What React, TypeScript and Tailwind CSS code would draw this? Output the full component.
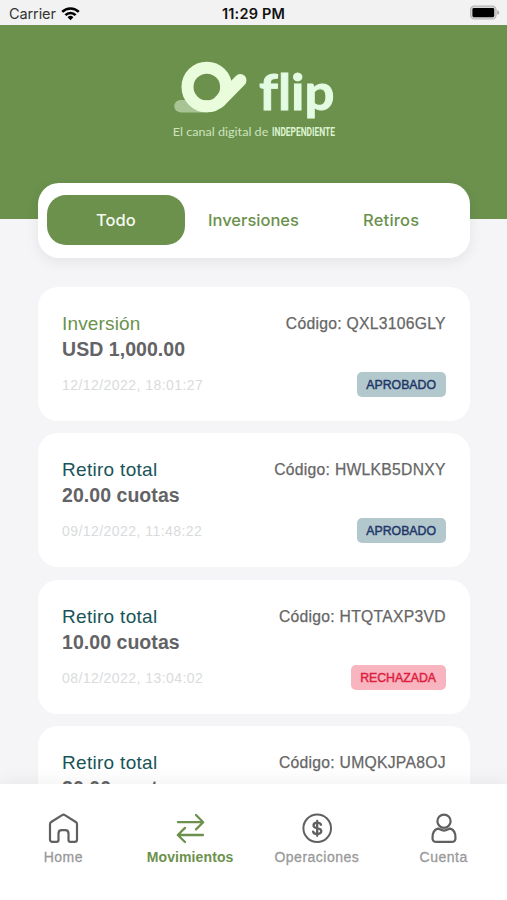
import type { ReactNode } from 'react'

type Movement = {
  type: string
  amount: string
  date: string
  code: string
  status: 'APROBADO' | 'RECHAZADA'
}

const movements: Movement[] = [
  { type: 'Inversión', amount: 'USD 1,000.00', date: '12/12/2022, 18:01:27', code: 'QXL3106GLY', status: 'APROBADO' },
  { type: 'Retiro total', amount: '20.00 cuotas', date: '09/12/2022, 11:48:22', code: 'HWLKB5DNXY', status: 'APROBADO' },
  { type: 'Retiro total', amount: '10.00 cuotas', date: '08/12/2022, 13:04:02', code: 'HTQTAXP3VD', status: 'RECHAZADA' },
  { type: 'Retiro total', amount: '20.00 cuotas', date: '08/12/2022, 12:41:10', code: 'UMQKJPA8OJ', status: 'APROBADO' },
]

function StatusBar() {
  return (
    <div className="h-[25px] shrink-0 bg-[#f2f2f2] px-[9px] grid grid-cols-3 items-center font-['Inter',sans-serif] text-[14.5px] leading-none text-[#111]">
      <div className="flex items-center gap-[5px] pt-[3px] text-[#333]">
        <span className="tracking-[-0.1px]">Carrier</span>
        <svg width="19" height="15" viewBox="0 0 19 15" fill="none" stroke="#000" strokeWidth="2.6" className="-mt-[2px]">
          <path d="M1.2 5.9a11.8 11.8 0 0 1 16.6 0" />
          <path d="M4.4 9.1a7.2 7.2 0 0 1 10.2 0" />
          <path d="M9.5 14.2 6.6 11.3a4.1 4.1 0 0 1 5.8 0z" fill="#000" stroke="none" />
        </svg>
      </div>
      <div className="pt-[3px] text-center font-semibold tracking-[0.2px] whitespace-nowrap">11:29 PM</div>
      <div className="flex justify-end -mr-[2px]">
        <svg width="31" height="15" viewBox="0 0 31 15">
          <rect x="1.6" y="1.2" width="25.4" height="12.8" rx="3.6" fill="#d8d8d8" stroke="#b5b5b5" strokeWidth="1.2" />
          <rect x="3.4" y="3" width="21.8" height="9.2" rx="1.4" fill="#000" />
          <path d="M28.2 5.2v4.6c1.3-.4 2-1.2 2-2.3s-.7-1.9-2-2.3z" fill="#aaa" />
        </svg>
      </div>
    </div>
  )
}

function Logo() {
  return (
    <svg width="170" height="90" viewBox="170 55 170 90">
      <path d="M180.5 106.2H207" stroke="#a9c494" strokeWidth="12.4" strokeLinecap="round" />
      <circle cx="206.8" cy="87" r="19.3" fill="none" stroke="#e9fddc" strokeWidth="12" />
      <path d="M240.3 80.3 219.7 101.3" stroke="#e9fddc" strokeWidth="12.4" strokeLinecap="round" />
      <text
        x="259"
        y="110"
        fontFamily="Lato, sans-serif"
        fontWeight="700"
        fontSize="50"
        textLength="75.5"
        lengthAdjust="spacingAndGlyphs"
        fill="#e4fbe3"
        stroke="#e4fbe3"
        strokeWidth="0.9"
        className="[font-variant-ligatures:none]"
      >
        flip
      </text>
      <text x="172.8" y="136" fontFamily="Lato, sans-serif" fontSize="11.6" textLength="95.5" lengthAdjust="spacingAndGlyphs" fill="#cfe3bd">
        El canal digital de
      </text>
      <text
        transform="translate(272 136.3) scale(1 1.2)"
        fontFamily="Roboto, sans-serif"
        fontWeight="700"
        fontSize="11"
        textLength="63"
        lengthAdjust="spacingAndGlyphs"
        fill="#dcf3d0"
      >
        INDEPENDIENTE
      </text>
    </svg>
  )
}

function Tabs() {
  return (
    <div className="mx-[37.5px] -mt-[36.5px] h-[75px] rounded-[21px] bg-white px-[9.5px] grid grid-cols-3 items-center text-center font-['Inter',sans-serif] text-[16.5px] font-medium text-[#6b914d] shadow-[0_4px_14px_rgba(0,0,0,0.07)]">
      <button className="h-[50px] rounded-[19px] bg-[#6b914d] text-[#f4fbee]">Todo</button>
      <button>Inversiones</button>
      <button className="tracking-[0.2px]">Retiros</button>
    </div>
  )
}

function MovementCard({ item }: { item: Movement }) {
  const approved = item.status === 'APROBADO'
  return (
    <div className="h-[134px] shrink-0 rounded-[20px] bg-white pl-[24.5px] pr-6 pt-6 flex justify-between">
      <div>
        <div className={`text-[19px] leading-[26px] ${item.type === 'Inversión' ? 'tracking-[0.15px] text-[#6b914d]' : 'tracking-[0.3px] text-[#185458]'}`}>
          {item.type}
        </div>
        <div className="text-[19.5px] leading-[26px] -mt-px font-bold tracking-[0.05px] text-[#636366]">{item.amount}</div>
        <div className="mt-[13px] text-[14px] leading-5 tracking-[0.45px] text-[#d9dbdd]">{item.date}</div>
      </div>
      <div className="flex flex-col items-end">
        <div className="text-[15.7px] leading-[25px] tracking-[0.28px] -mr-[0.3px] text-[#666] [-webkit-text-stroke:0.25px_#666]">Código: {item.code}</div>
        {approved ? (
          <div className="mt-[36px] h-[25px] rounded-[5px] bg-[#b3c8cd] px-[9.5px] text-[12.3px] leading-[26px] text-[#1f3768] [-webkit-text-stroke:0.45px_#1f3768]">APROBADO</div>
        ) : (
          <div className="mt-[36px] h-[25px] rounded-[5px] bg-[#f8b5bf] px-[9.5px] text-[12.3px] leading-[26px] text-[#dd1f3f] [-webkit-text-stroke:0.45px_#dd1f3f]">RECHAZADA</div>
        )}
      </div>
    </div>
  )
}

function NavItem({ label, active, children }: { label: string; active?: boolean; children: ReactNode }) {
  return (
    <div className="flex-1 flex flex-col items-center">
      <svg
        width="32"
        height="32"
        viewBox="0 0 32 32"
        fill="none"
        stroke={active ? '#6b914d' : '#606060'}
        strokeWidth="2.3"
        strokeLinecap="round"
        strokeLinejoin="round"
      >
        {children}
      </svg>
      <span className={`mt-[3px] leading-5 text-[14px] ${active ? 'font-bold tracking-[0.1px] text-[#6b914d]' : 'tracking-[0.5px] text-[#999] [-webkit-text-stroke:0.3px_#999]'}`}>
        {label}
      </span>
    </div>
  )
}

function BottomNav() {
  return (
    <div className="relative h-[116px] shrink-0 bg-white pt-7 flex shadow-[0_-4px_16px_rgba(0,0,0,0.05)]">
      <NavItem label="Home">
        <path d="M3 12.2c0-1 .4-1.700 1.200-2.200L15.100 3.100c.9-.6 1.900-.6 2.800 0L28.800 10c.8.5 1.200 1.200 1.200 2.200v15.300c0 1.500-.9 2.400-2.400 2.400h-4.200c-1.200 0-1.900-.7-1.900-1.900v-6.600c0-2-1.300-3.300-3.300-3.300h-3.400c-2 0-3.300 1.300-3.300 3.300V28c0 1.200-.7 1.900-1.900 1.900H5.400c-1.500 0-2.400-.9-2.400-2.400z" strokeWidth="2.2" />
      </NavItem>
      <NavItem label="Movimientos" active>
        <path d="M4 10.2H29M22 3l7.200 7.200-7.200 7.200" />
        <path d="M29 23H4M11 15.900 3.800 23l7.200 7" />
      </NavItem>
      <NavItem label="Operaciones">
        <circle cx="16.2" cy="16.2" r="13.8" strokeWidth="2" />
        <path d="M20 12.800c-.6-1.500-2-2.100-3.800-2.100-2.200 0-3.700 1-3.700 2.700 0 3.900 7.800 1.700 7.800 5.700 0 1.800-1.600 2.900-4.100 2.900-2.100 0-3.700-.8-4.100-2.400M16.200 8.800v15" />
      </NavItem>
      <NavItem label="Cuenta">
        <circle cx="16" cy="9.2" r="6.6" strokeWidth="2.2" />
        <path d="M9.700 16.600c-3.200.9-5.200 4.300-5.200 9.300 0 2.600 1.300 4 3.800 4h15.400c2.500 0 3.800-1.400 3.800-4 0-5-2-8.400-5.200-9.300-1.500-.3-3 2-6.300 2s-4.800-2.300-6.300-2z" strokeWidth="2.2" />
      </NavItem>
    </div>
  )
}

export default function App() {
  return (
    <div className="w-full h-[900px] overflow-hidden flex flex-col bg-[#f5f5f8] font-['Liberation_Sans',Arial,sans-serif]">
      <StatusBar />
      <div className="h-[194px] shrink-0 bg-[#6b914d] pt-[30px] pl-[3px] flex justify-center items-start">
        <Logo />
      </div>
      <Tabs />
      <div className="flex-1 min-h-0 overflow-hidden px-[37.5px] pt-[29px] flex flex-col gap-[12.6px]">
        {movements.map((item) => (
          <MovementCard key={item.code} item={item} />
        ))}
      </div>
      <BottomNav />
    </div>
  )
}
